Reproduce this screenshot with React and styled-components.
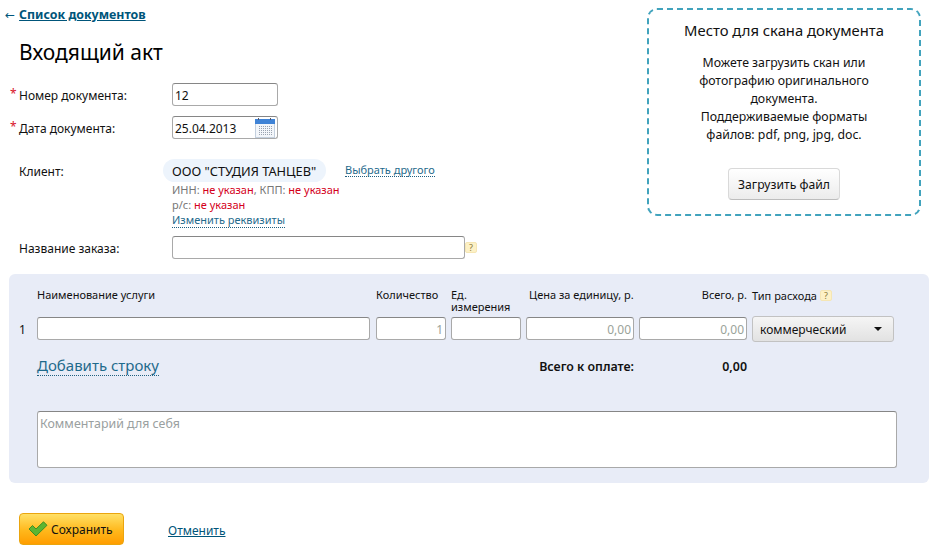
import React from 'react';
import styled, { createGlobalStyle } from 'styled-components';

const fontStack = '"Noto Sans", "Open Sans", "DejaVu Sans", sans-serif';

const GlobalStyle = createGlobalStyle`
  html, body {
    margin: 0;
    padding: 0;
    background: #fff;
  }
  body {
    font-family: ${fontStack};
    font-size: 12px;
    color: #111;
  }
`;

const Page = styled.div`
  width: 943px;
  height: 555px;
  overflow: hidden;
`;

const Top = styled.div`
  display: flex;
  align-items: flex-start;
  height: 274px;
`;

const LeftColumn = styled.div`
  width: 647px;
  flex: none;
`;

const BackRow = styled.div`
  padding: 6px 0 0 5px;
  height: 18px;
  line-height: 18px;
  color: #00557a;
`;

const BackLink = styled.a`
  margin-left: 4px;
  font-size: 12.4px;
  font-weight: 700;
  color: #00557a;
  text-decoration: underline;
`;

const Title = styled.h1`
  margin: 13px 0 0 19px;
  height: 30px;
  font-size: 21px;
  line-height: 30px;
  font-weight: 400;
  color: #000;
`;

const FormRow = styled.div`
  display: flex;
  align-items: center;
  margin-top: ${(p) => p.$top}px;
`;

const Label = styled.label`
  position: relative;
  width: 153px;
  margin-left: 19px;
  padding-top: 2px;
  flex: none;
  line-height: 21px;
`;

const Star = styled.span`
  position: absolute;
  left: -9px;
  top: 0;
  color: #d8122a;
`;

const inputBase = `
  box-sizing: border-box;
  height: 23px;
  border: 1px solid #a9a9a9;
  border-top-color: #868686;
  border-radius: 3px;
  background: #fff;
  font-family: ${fontStack};
  font-size: 12px;
  outline: none;
`;

const TextInput = styled.input`
  ${inputBase}
  width: ${(p) => p.$width || '100%'};
  padding: 2px 2px 0;
  color: #111;
  text-align: ${(p) => (p.$right ? 'right' : 'left')};

  &::placeholder {
    color: #9aa39a;
    opacity: 1;
  }
`;

const DateBox = styled.div`
  ${inputBase}
  display: flex;
  align-items: center;
  justify-content: space-between;
  width: 106px;
  padding: 0 2px;
`;

const DateValue = styled.span`
  padding-top: 1px;
`;

const ClientRow = styled.div`
  display: flex;
  margin-top: 20px;
`;

const ClientLabel = styled.div`
  width: 144px;
  margin-left: 19px;
  padding-top: 1px;
  flex: none;
  line-height: 23px;
`;

const ClientInfo = styled.div`
  display: flex;
  flex-direction: column;
  align-items: flex-start;
`;

const ClientHead = styled.div`
  display: flex;
  align-items: center;
`;

const ClientPill = styled.div`
  width: 163px;
  box-sizing: border-box;
  height: 23px;
  padding-left: 9px;
  border-radius: 12px;
  background: #edf4fc;
  font-size: 12.8px;
  line-height: 24px;
  white-space: nowrap;
`;

const DottedLink = styled.a`
  color: #1f6a8c;
  line-height: 1.15;
  font-size: ${(p) => p.$size || 11}px;
  border-bottom: 1px dotted #1f5f7f;
  white-space: nowrap;
`;

const ChooseOther = styled(DottedLink)`
  margin-left: 19px;
`;

const ClientDetails = styled.div`
  padding-left: 9px;
  font-size: 11px;
  line-height: 15px;
  color: #777;
`;

const Missing = styled.span`
  color: #d4001a;
`;

const HelpMark = styled.span`
  display: inline-flex;
  align-items: center;
  justify-content: center;
  box-sizing: border-box;
  width: 12px;
  height: 11px;
  flex: none;
  margin-left: ${(p) => p.$gap || 0}px;
  background: #fdf1c6;
  border: 1px solid #f5e6b4;
  border-radius: 2px;
  font-size: 9px;
  line-height: 1;
  color: #8a7a3a;
`;

const UploadBox = styled.aside`
  box-sizing: border-box;
  width: 274px;
  height: 208px;
  margin-top: 8px;
  flex: none;
  padding: 11px 20px 0;
  border: 2px dashed #41a3bd;
  border-radius: 10px;
  display: flex;
  flex-direction: column;
  align-items: center;
  text-align: center;
`;

const UploadTitle = styled.div`
  font-size: 14.8px;
  line-height: 19px;
  white-space: nowrap;
  color: #111;
`;

const UploadText = styled.p`
  margin: 14px 0 0;
  width: 190px;
  font-size: 12.3px;
  line-height: 18px;
`;

const GreyButton = styled.button`
  margin-top: 24px;
  width: 112px;
  height: 32px;
  border: 1px solid #d9d9d9;
  border-bottom-color: #bdbdbd;
  border-radius: 4px;
  background: linear-gradient(#ffffff, #ececec);
  font-family: ${fontStack};
  font-size: 12.2px;
  color: #111;
`;

const Panel = styled.section`
  box-sizing: border-box;
  width: 920px;
  height: 209px;
  margin-left: 9px;
  padding: 0 10px;
  border-radius: 6px;
  background: #e8ecf7;
`;

const ServiceGrid = styled.div`
  display: grid;
  grid-template-columns: 13px 334px 70px 70px 108px 108px 142px;
  column-gap: 5px;
`;

const HeadCell = styled.div`
  grid-column: ${(p) => p.$col};
  height: 43px;
  padding-top: 15px;
  box-sizing: border-box;
  font-size: 11px;
  line-height: 12px;
  color: #111;
  white-space: nowrap;
  text-align: ${(p) => (p.$right ? 'right' : 'left')};
  padding-left: ${(p) => p.$indent || 0}px;
`;

const TypeHead = styled(HeadCell)`
  display: flex;
  align-items: flex-start;
  padding-top: 16px;
`;

const RowNumber = styled.div`
  line-height: 23px;
  align-self: center;
`;

const NameCell = styled.div`
  padding-right: 1px;
`;

const TypeSelect = styled.button`
  width: 100%;
  height: 26px;
  margin-top: -1px;
  padding: 0 11px 0 7px;
  border: 1px solid #c2c2c2;
  border-radius: 3px;
  background: linear-gradient(#f5f5f5, #e2e2e2);
  display: flex;
  align-items: center;
  justify-content: space-between;
  font-family: ${fontStack};
  font-size: 12px;
  color: #111;
`;

const Caret = styled.span`
  width: 0;
  height: 0;
  border-left: 4px solid transparent;
  border-right: 4px solid transparent;
  border-top: 4px solid #111;
`;

const AddCell = styled.div`
  grid-column: 2 / 4;
  margin-top: 15px;
`;

const TotalLabel = styled.div`
  grid-column: 4 / 6;
  margin-top: 16px;
  font-weight: 600;
  font-size: 12.4px;
  line-height: 18px;
  text-align: right;
  color: #111;
`;

const TotalValue = styled(TotalLabel)`
  grid-column: 6;
`;

const Comment = styled.textarea`
  ${inputBase}
  display: block;
  width: 860px;
  height: 57px;
  margin: 35px 0 0 18px;
  padding: 3px 2px;
  font-size: 12.4px;
  resize: none;

  &::placeholder {
    color: #9aa0a0;
    opacity: 1;
  }
`;

const Footer = styled.div`
  display: flex;
  align-items: center;
  margin: 30px 0 0 19px;
`;

const SaveButton = styled.button`
  display: flex;
  align-items: center;
  gap: 3px;
  width: 105px;
  height: 32px;
  padding: 0 0 0 8px;
  border: 1px solid #eaa50e;
  border-radius: 4px;
  background: linear-gradient(#ffe066, #ffb81c 55%, #ff9d00);
  font-family: ${fontStack};
  font-size: 12px;
  color: #111;
`;

const CancelLink = styled.a`
  margin: 2px 0 0 44px;
  color: #00557a;
  text-decoration: underline;
`;

const CalendarIcon = () => (
  <svg width="20" height="20" viewBox="0 0 20 20">
    <rect x="0.5" y="1.5" width="19" height="18" fill="#f3f6fa" stroke="#c4d0de" />
    <rect x="0" y="1" width="20" height="5" fill="#3f83d6" />
    <rect x="3" y="0" width="1" height="2" fill="#556" />
    <rect x="15" y="0" width="1" height="2" fill="#556" />
    {[8, 10, 12, 14, 16].map((y) =>
      [4, 6, 8, 10, 12, 14, 16].map((x) => (
        <rect key={`${x}-${y}`} x={x} y={y} width="1" height="1" fill="#9aa3b0" />
      ))
    )}
  </svg>
);

const CheckIcon = () => (
  <svg width="20" height="16" viewBox="0 0 20 16">
    <path
      d="M1 8 L4.5 4.5 L8 8 L15.5 0.8 L19 4.3 L8 15 Z"
      fill="#5cb531"
      stroke="#3f8f22"
      strokeWidth="1"
      strokeLinejoin="round"
    />
  </svg>
);

const App = () => {
  return (
    <Page>
      <GlobalStyle />
      <Top>
        <LeftColumn>
          <BackRow>
            ←<BackLink>Список документов</BackLink>
          </BackRow>
          <Title>Входящий акт</Title>
          <FormRow $top={16}>
            <Label><Star>*</Star>Номер документа:</Label>
            <TextInput $width="106px" defaultValue="12" />
          </FormRow>
          <FormRow $top={10}>
            <Label><Star>*</Star>Дата документа:</Label>
            <DateBox>
              <DateValue>25.04.2013</DateValue>
              <CalendarIcon />
            </DateBox>
          </FormRow>
          <ClientRow>
            <ClientLabel>Клиент:</ClientLabel>
            <ClientInfo>
              <ClientHead>
                <ClientPill>ООО "СТУДИЯ ТАНЦЕВ"</ClientPill>
                <ChooseOther>Выбрать другого</ChooseOther>
              </ClientHead>
              <ClientDetails>
                <div>ИНН: <Missing>не указан</Missing>, КПП: <Missing>не указан</Missing></div>
                <div>р/с: <Missing>не указан</Missing></div>
                <DottedLink>Изменить реквизиты</DottedLink>
              </ClientDetails>
            </ClientInfo>
          </ClientRow>
          <FormRow $top={9}>
            <Label>Название заказа:</Label>
            <TextInput $width="293px" />
            <HelpMark>?</HelpMark>
          </FormRow>
        </LeftColumn>
        <UploadBox>
          <UploadTitle>Место для скана документа</UploadTitle>
          <UploadText>
            Можете загрузить скан или фотографию оригинального документа.
            <br />
            Поддерживаемые форматы файлов: pdf, png, jpg, doc.
          </UploadText>
          <GreyButton>Загрузить файл</GreyButton>
        </UploadBox>
      </Top>

      <Panel>
        <ServiceGrid>
          <HeadCell $col={2}>Наименование услуги</HeadCell>
          <HeadCell $col={3}>Количество</HeadCell>
          <HeadCell $col={4}>Ед.<br />измерения</HeadCell>
          <HeadCell $col={5} $indent={3}>Цена за единицу, р.</HeadCell>
          <HeadCell $col={6} $right>Всего, р.</HeadCell>
          <TypeHead $col={7}>Тип расхода<HelpMark $gap={3}>?</HelpMark></TypeHead>

          <RowNumber>1</RowNumber>
          <NameCell><TextInput /></NameCell>
          <TextInput $right placeholder="1" />
          <TextInput />
          <TextInput $right placeholder="0,00" />
          <TextInput $right placeholder="0,00" />
          <TypeSelect>коммерческий<Caret /></TypeSelect>

          <AddCell><DottedLink $size={15}>Добавить строку</DottedLink></AddCell>
          <TotalLabel>Всего к оплате:</TotalLabel>
          <TotalValue>0,00</TotalValue>
        </ServiceGrid>
        <Comment placeholder="Комментарий для себя" />
      </Panel>

      <Footer>
        <SaveButton><CheckIcon />Сохранить</SaveButton>
        <CancelLink>Отменить</CancelLink>
      </Footer>
    </Page>
  );
};

export default App;
